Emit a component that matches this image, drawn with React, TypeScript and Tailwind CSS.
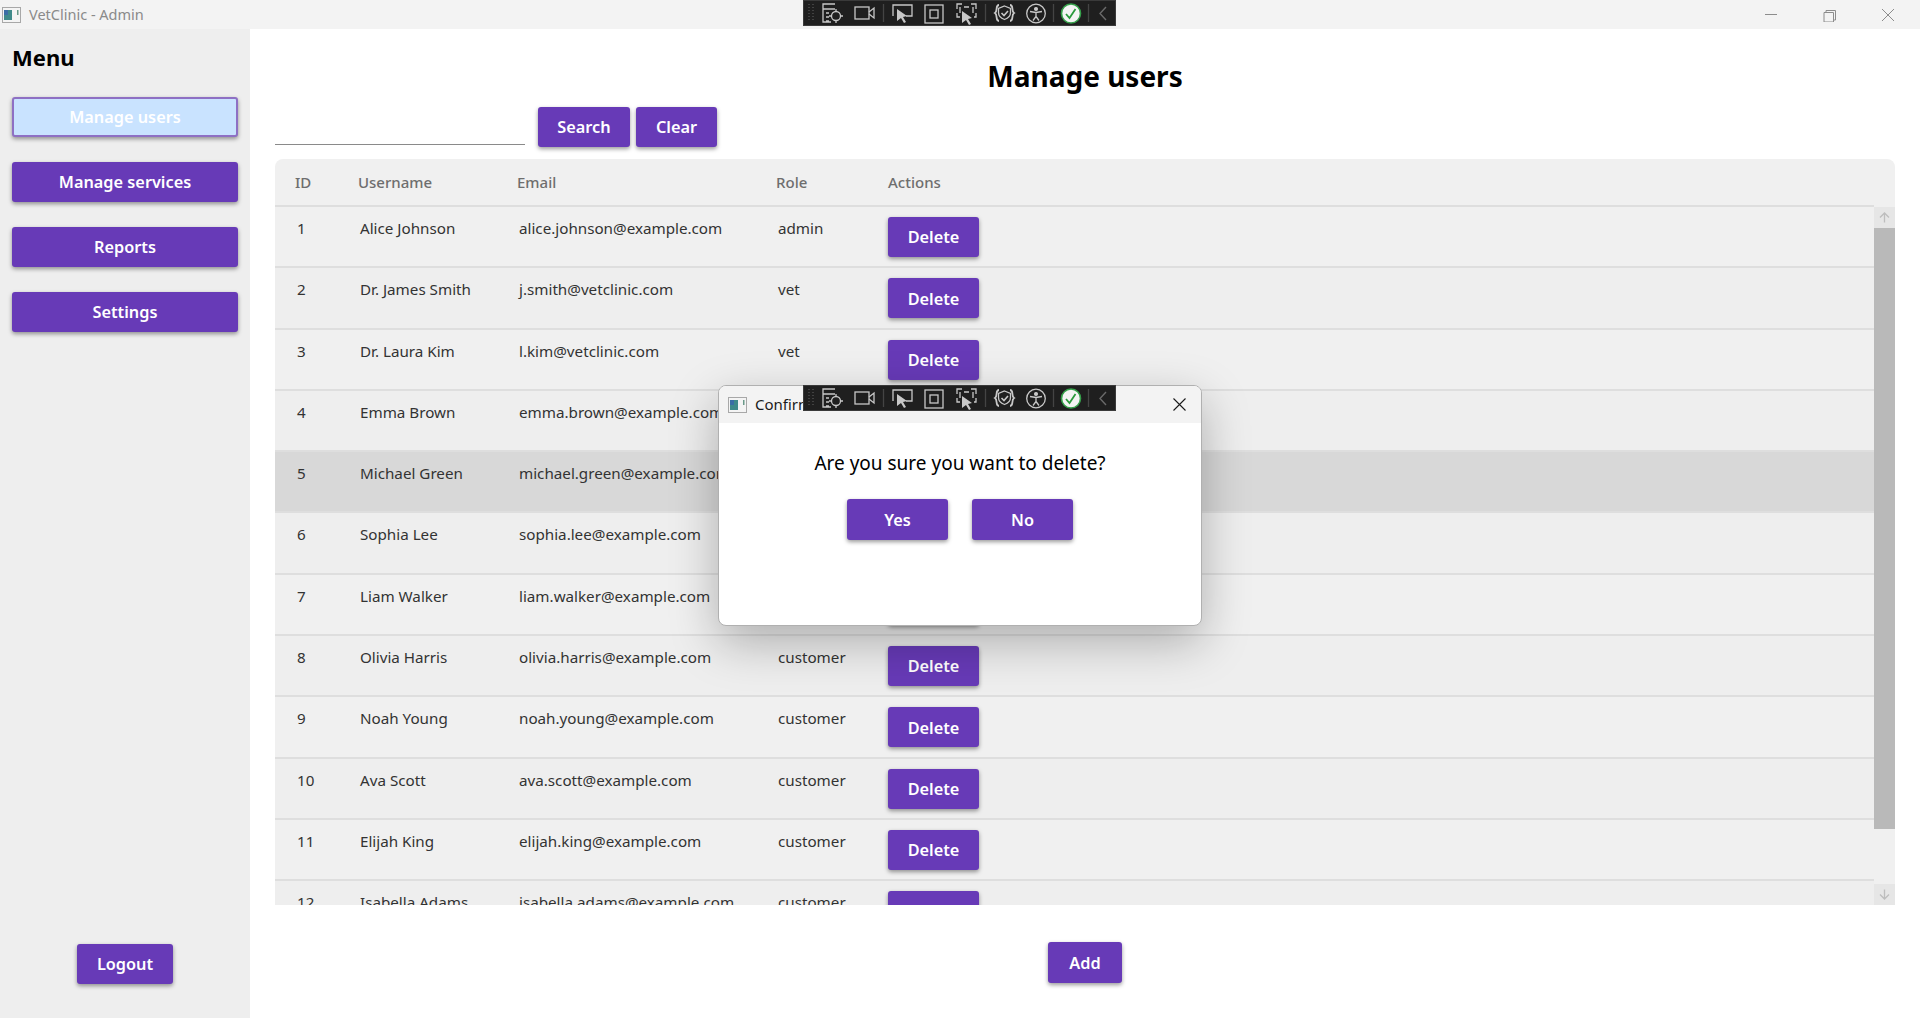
import React from "react";

const users = [
  ["1", "Alice Johnson", "alice.johnson@example.com", "admin"],
  ["2", "Dr. James Smith", "j.smith@vetclinic.com", "vet"],
  ["3", "Dr. Laura Kim", "l.kim@vetclinic.com", "vet"],
  ["4", "Emma Brown", "emma.brown@example.com", "customer"],
  ["5", "Michael Green", "michael.green@example.com", "customer"],
  ["6", "Sophia Lee", "sophia.lee@example.com", "customer"],
  ["7", "Liam Walker", "liam.walker@example.com", "customer"],
  ["8", "Olivia Harris", "olivia.harris@example.com", "customer"],
  ["9", "Noah Young", "noah.young@example.com", "customer"],
  ["10", "Ava Scott", "ava.scott@example.com", "customer"],
  ["11", "Elijah King", "elijah.king@example.com", "customer"],
  ["12", "Isabella Adams", "isabella.adams@example.com", "customer"],
];

const columns = "grid grid-cols-[83px_159px_259px_112px_1fr]";

function PurpleButton({ className, children }: { className: string; children: React.ReactNode }) {
  return (
    <button className={`flex items-center justify-center rounded-[3px] bg-[#673ab7] pt-px text-[16.300px] font-semibold text-white shadow-[0_2px_4px_rgba(0,0,0,0.4)] ${className}`}>
      {children}
    </button>
  );
}

function AppIcon() {
  return (
    <svg width="19" height="16" viewBox="0 0 19 16">
      <rect x="0.5" y="0.5" width="18" height="15" fill="#f4f4f4" stroke="#a8a8a8" />
      <rect x="2" y="3" width="8" height="10" fill="#3f8a8a" />
      <rect x="2" y="3" width="4" height="5" fill="#3b6ea5" />
      <rect x="15" y="3" width="1.5" height="5" fill="#6a9a8a" />
    </svg>
  );
}

function DebugToolbar({ className }: { className: string }) {
  return (
    <div className={`absolute left-[803px] h-[26px] w-[313px] border border-[#3a3a3a] bg-[#1f1f1f] ${className}`}>
      <svg width="311" height="24" viewBox="0 0 311 24" fill="none" stroke="#c8c8c8" strokeWidth="1.3">
        <path d="M5 3v18M9 3v18" stroke="#555" strokeDasharray="1 2" />
        {/* element picker */}
        <path d="M31 3H19v18h8M19 8h12M22 12h3M22 16h3M22 20h3" />
        <circle cx="32" cy="15" r="4.5" />
        <path d="M32 8v3M32 19v3M25 15h3M36 15h3" />
        {/* camera */}
        <rect x="51" y="6" width="14" height="12" />
        <path d="M65 11l5-4v10l-5-4" />
        <path d="M79.500 3v18" stroke="#444" />
        {/* select */}
        <path d="M89 15V4h19v11h-6" />
        <path d="M93 8l10 7-4 1 3 5-2 1-3-5-4 3z" fill="#c8c8c8" stroke="none" />
        {/* layout box */}
        <rect x="121" y="4" width="18" height="18" />
        <rect x="126" y="9" width="8" height="8" />
        {/* select frame */}
        <path d="M153 8V3h5M167 3h5v5M153 12v4h3M172 12v4h-2M160 6h5M156 6v6M169 6v6" />
        <path d="M158 10l10 7-4 1 3 5-2 1-3-5-4 3z" fill="#c8c8c8" stroke="none" />
        <path d="M181.500 3v18" stroke="#444" />
        {/* hot reload badge */}
        <path d="M195 4c-4 0-1 6-4 8 3 2 0 8 4 8M206 4c4 0 1 6 4 8-3 2 0 8-4 8" strokeWidth="1.8" />
        <path d="M200.500 5l6 2.500v4c0 4-3 6-6 7-3-1-6-3-6-7v-4z" strokeWidth="1.300" />
        <path d="M197.500 12l2.500 2.500 4-4.500" strokeWidth="1.600" />
        {/* accessibility */}
        <circle cx="232" cy="12.500" r="9.300" />
        <circle cx="232" cy="8" r="1.400" fill="#c8c8c8" />
        <path d="M226 10.500l6 1 6-1M232 11.500v4l-3 4M232 15.500l3 4" />
        <path d="M249.500 3v18" stroke="#444" />
        {/* status ok */}
        <circle cx="267" cy="12.500" r="9.500" fill="#f4f4f4" stroke="#35a04a" strokeWidth="1.600" />
        <path d="M262 13l3.500 4 6-9" stroke="#2a9a3c" strokeWidth="1.800" />
        <path d="M284.500 3v18" stroke="#444" />
        {/* collapse */}
        <path d="M302 6l-6 6.500 6 6.500" stroke="#6a6a6a" strokeWidth="1.400" />
      </svg>
    </div>
  );
}

function ScrollArrow({ up }: { up?: boolean }) {
  return (
    <div className="flex h-[21px] items-center justify-center bg-[#e6e6e6]">
      <svg width="11" height="11" viewBox="0 0 11 11" fill="none" stroke="#bdbdbd" strokeWidth="1.3" className={up ? "" : "rotate-180"}>
        <path d="M5.500 10.500V1M1 5.500l4.500-4.500 4.500 4.500" />
      </svg>
    </div>
  );
}

export default function App() {
  return (
    <div className="relative flex h-[1018px] w-[1920px] flex-col overflow-hidden bg-white font-['Noto_Sans',sans-serif]">
      {/* window title bar */}
      <div className="flex h-[29px] shrink-0 items-center bg-[#f3f3f3] pl-[2px]">
        <AppIcon />
        <span className="ml-2 text-[14.500px] text-[#8a8a8a]">VetClinic - Admin</span>
        <div className="ml-auto flex items-center pr-[25px]">
          <svg width="130" height="14" viewBox="0 0 130 14" fill="none" stroke="#8c8c8c" strokeWidth="1">
            <path d="M0 6.500h12M59 4.500h9.500v9.500H59zM61 4.500V2.500h9.500V12H68.500M117 1l12 12M129 1l-12 12" />
          </svg>
        </div>
      </div>

      <div className="flex min-h-0 flex-1">
        {/* sidebar */}
        <aside className="flex w-[250px] shrink-0 flex-col bg-[#eeeeee] px-3 pb-[34px]">
          <h2 className="mt-3 text-[22px] font-bold leading-[32px] text-black">Menu</h2>
          <div className="mt-6 flex flex-col gap-[25px]">
            <button className="flex h-[40px] items-center justify-center rounded-[3px] border-2 border-[#8e70c4] bg-[#c9e3ff] pt-px text-[16.300px] font-semibold text-white shadow-[0_2px_4px_rgba(0,0,0,0.4)]">
              Manage users
            </button>
            <PurpleButton className="h-[40px]">Manage services</PurpleButton>
            <PurpleButton className="h-[40px]">Reports</PurpleButton>
            <PurpleButton className="h-[40px]">Settings</PurpleButton>
          </div>
          <PurpleButton className="mx-auto mt-auto h-[40px] w-[96px]">Logout</PurpleButton>
        </aside>

        {/* main */}
        <main className="flex min-w-0 flex-1 flex-col pl-[25px] pr-[25px]">
          <h1 className="mt-[27px] text-center text-[28px] font-bold leading-[40px] text-black">Manage users</h1>
          <div className="mt-[11px] flex h-[40px] items-start">
            <div className="h-[38px] w-[250px] border-b border-[#8a8a8a]" />
            <PurpleButton className="ml-[13px] h-[40px] w-[92px]">Search</PurpleButton>
            <PurpleButton className="ml-[6px] h-[40px] w-[81px]">Clear</PurpleButton>
          </div>

          {/* users table */}
          <section className="mt-3 flex h-[746px] flex-col overflow-hidden rounded-t-lg bg-[#f0f0f0]">
            <div className={`${columns} mr-[21px] h-[48px] shrink-0 items-center border-b-2 border-[#dedede] text-[15px] font-medium text-[#6e6e6e]`}>
              <span className="pl-5">ID</span>
              <span>Username</span>
              <span>Email</span>
              <span>Role</span>
              <span>Actions</span>
            </div>
            <div className="flex min-h-0 flex-1">
              <div className="min-w-0 flex-1 overflow-hidden">
                {users.map((u, i) => (
                  <div
                    key={u[0]}
                    className={`${columns} h-[61.300px] items-start border-b-2 border-[#dedede] text-[15.200px] text-[#333333] ${
                      i === 4 ? "bg-[#d8d8d8]" : i % 2 ? "bg-[#eeeeee]" : "bg-[#f0f0f0]"
                    }`}
                  >
                    <span className="pl-[22px] pt-[10px]">{u[0]}</span>
                    <span className="pl-[2px] pt-[10px]">{u[1]}</span>
                    <span className="pl-[2px] pt-[10px]">{u[2]}</span>
                    <span className="pl-[2px] pt-[10px]">{u[3]}</span>
                    <div className="pt-[10px]">
                      <PurpleButton className="h-[40px] w-[91px]">Delete</PurpleButton>
                    </div>
                  </div>
                ))}
              </div>
              <div className="flex w-[21px] shrink-0 flex-col bg-[#f0f0f0]">
                <ScrollArrow up />
                <div className="h-[601px] bg-[#b9b9b9]" />
                <div className="flex-1" />
                <ScrollArrow />
              </div>
            </div>
          </section>

          <div className="mt-[37px] flex justify-center">
            <PurpleButton className="h-[41px] w-[74px]">Add</PurpleButton>
          </div>
        </main>
      </div>

      {/* confirm dialog */}
      <div className="absolute left-[718px] top-[385px] flex h-[241px] w-[484px] flex-col overflow-hidden rounded-lg border border-[#b0b0b0] bg-white shadow-[0_16px_48px_rgba(0,0,0,0.28)]">
        <div className="flex h-[37px] shrink-0 items-center bg-[#f3f3f3] pl-[9px] pr-[15px]">
          <AppIcon />
          <span className="ml-2 text-[15px] text-[#1a1a1a]">Confirm</span>
          <svg className="ml-auto" width="13" height="13" viewBox="0 0 13 13" fill="none" stroke="#1a1a1a" strokeWidth="1.100">
            <path d="M0.500 0.500l12 12M12.500 0.500l-12 12" />
          </svg>
        </div>
        <p className="mt-[26px] text-center text-[19px] leading-[28px] text-black">Are you sure you want to delete?</p>
        <div className="mt-[22px] flex justify-center gap-6">
          <PurpleButton className="h-[41px] w-[101px]">Yes</PurpleButton>
          <PurpleButton className="h-[41px] w-[101px]">No</PurpleButton>
        </div>
      </div>

      <DebugToolbar className="top-0" />
      <DebugToolbar className="top-[385px]" />
    </div>
  );
}
